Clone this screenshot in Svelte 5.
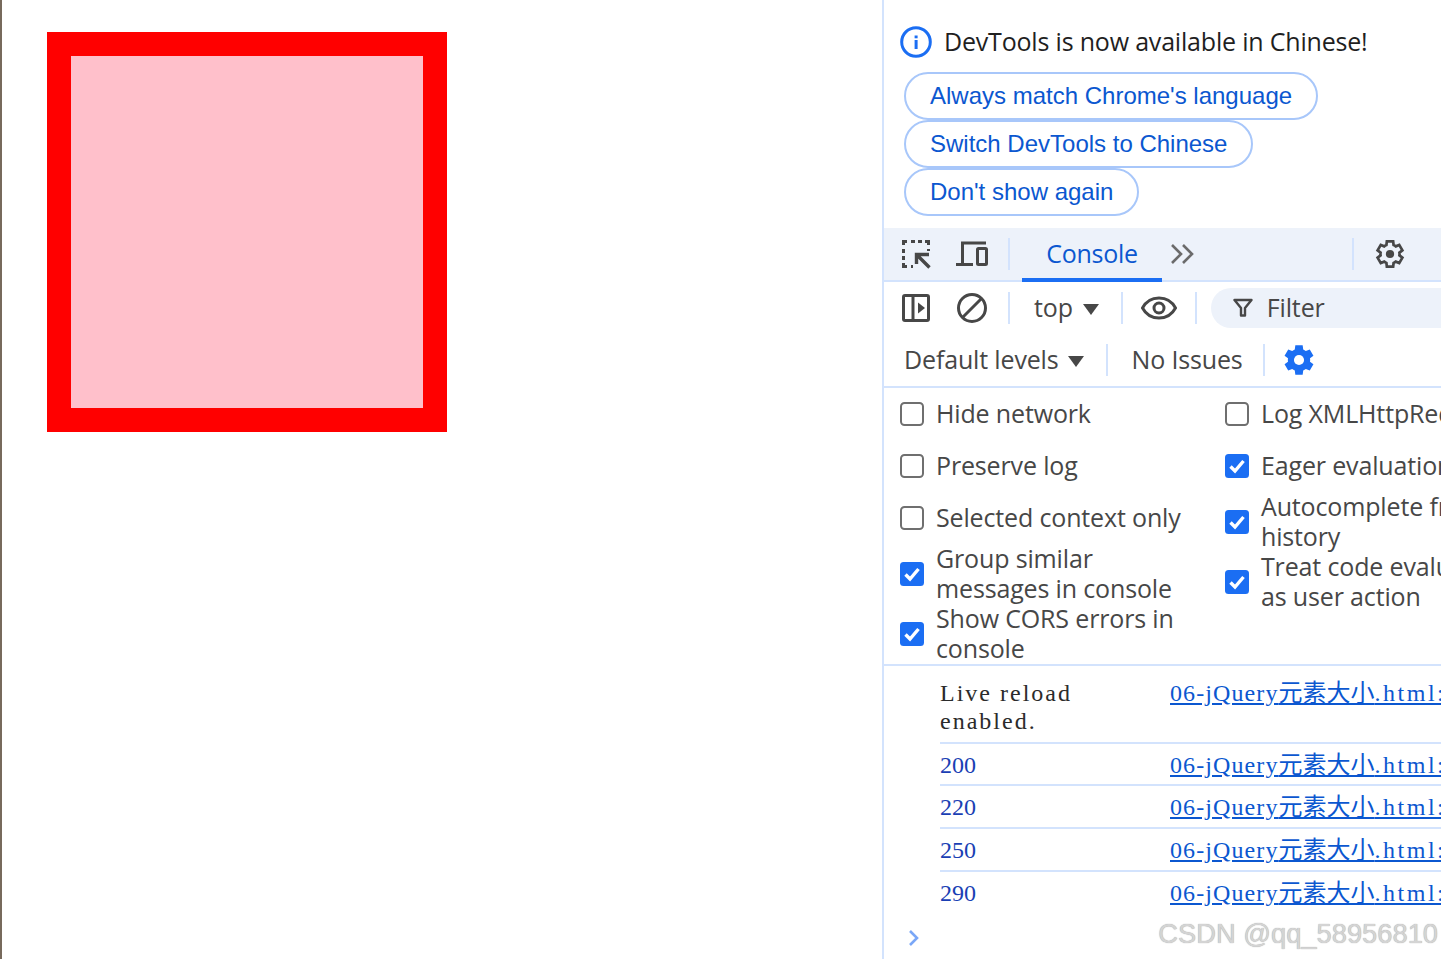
<script>
  const left = [
    { label: 'Hide network', on: false },
    { label: 'Preserve log', on: false },
    { label: 'Selected context only', on: false },
    { label: 'Group similar messages in console', on: true },
    { label: 'Show CORS errors in console', on: true }
  ];
  const right = [
    { label: 'Log XMLHttpRequests', on: false },
    { label: 'Eager evaluation', on: true },
    { label: 'Autocomplete from history', on: true },
    { label: 'Treat code evaluation as user action', on: true }
  ];
  const logs = ['200', '220', '250', '290'];
  const gear = 'M9.25 22l-.4-3.2a7 7 0 0 1-1.96-1.12l-2.97 1.25-2.75-4.75 2.57-1.95a7 7 0 0 1 0-2.46L1.17 7.82l2.75-4.75 2.97 1.25A7 7 0 0 1 8.85 3.2l.4-3.2h5.5l.4 3.2a7 7 0 0 1 1.96 1.12l2.97-1.25 2.75 4.75-2.57 1.95a7 7 0 0 1 0 2.46l2.57 1.95-2.75 4.75-2.97-1.25a7 7 0 0 1-1.96 1.12l-.4 3.2z';
</script>

{#snippet check(on)}
  {#if on}
    <svg class="box" viewBox="0 0 24 24"><rect width="24" height="24" rx="3.5" fill="#1b6ef3"/><path d="M5.5 12.5l4.5 4.5 8.5-10" fill="none" stroke="#fff" stroke-width="3.4"/></svg>
  {:else}
    <svg class="box" viewBox="0 0 24 24"><rect x="1" y="1" width="22" height="22" rx="3.5" fill="none" stroke="#6f6f6f" stroke-width="2"/></svg>
  {/if}
{/snippet}

{#snippet link()}
  <span class="link"><span class="ascii">06-jQuery</span><span class="cjk">元素大小</span><span class="ext">.html:</span></span>
{/snippet}

<div class="page">
  <div class="stripe"></div>
  <main class="view"><div class="square"></div></main>
  <aside class="devtools">
    <div class="notice">
      <div class="headline">
        <svg class="ic32" viewBox="0 0 32 32"><circle cx="16" cy="16" r="14.3" fill="none" stroke="#1b6ef3" stroke-width="3"/><rect x="14.6" y="14" width="3" height="9" fill="#1b6ef3"/><rect x="14.6" y="9.5" width="3" height="2.8" fill="#1b6ef3"/></svg>
        <span class="lift">DevTools is now available in Chinese!</span>
      </div>
      <button>Always match Chrome's language</button>
      <button>Switch DevTools to Chinese</button>
      <button>Don't show again</button>
    </div>

    <div class="tabbar">
      <svg class="ic32 inspect" viewBox="0 0 32 32" fill="none" stroke="#474747" stroke-width="3"><path d="M3.500 7V3.500H7M11 3.500h4M18 3.500h4M25 3.500h3.500V7M28.500 11v2M3.500 11v4M3.500 18v4M3.500 25v3.500H7M11 28.500h2"/><path d="M29.500 29.500L18 18M16.500 26V16.500H29" stroke-width="3.400"/></svg>
      <svg class="ic32 device" viewBox="0 0 32 32" fill="none" stroke="#474747" stroke-width="3"><path d="M30 5H6.500V25"/><path d="M0 26.500h17"/><rect x="21.5" y="10.5" width="9" height="16" rx="1"/></svg>
      <i class="sep wide"></i>
      <div class="tab">Console</div>
      <svg class="more" viewBox="0 0 26 20" fill="none" stroke="#6b6b6b" stroke-width="2.6"><path d="M2 1l9 9-9 9M13 1l9 9-9 9"/></svg>
      <i class="sep sep-right"></i>
      <svg class="ic32 cog" viewBox="-2 -2 28 26"><path d={gear} fill="none" stroke="#474747" stroke-width="2.4"/><circle cx="12" cy="11" r="3.600" fill="#474747"/></svg>
    </div>

    <div class="tools">
      <svg class="ic32" viewBox="0 0 32 32" fill="none" stroke="#474747" stroke-width="3"><rect x="3.5" y="3.5" width="25" height="25" rx="1.5"/><path d="M13 3v26"/><path d="M18 10.5l7 5.5-7 5.5z" fill="#474747" stroke="none"/></svg>
      <svg class="ic32 clear" viewBox="0 0 32 32" fill="none" stroke="#474747" stroke-width="3"><circle cx="16" cy="16" r="13.5"/><path d="M7 25L25 7"/></svg>
      <i class="sep wide"></i>
      <div class="text top"><span class="lift">top</span><span class="tri"></span></div>
      <i class="sep"></i>
      <svg class="eye" viewBox="0 0 36 24" fill="none" stroke="#474747" stroke-width="3"><path d="M1.5 12C5 5.5 11 2 18 2s13 3.500 16.500 10C31 18.500 25 22 18 22S5 18.500 1.500 12z"/><circle cx="18" cy="12" r="5"/></svg>
      <i class="sep"></i>
      <div class="filter">
        <svg class="funnel" viewBox="0 0 20 20" fill="none" stroke="#474747" stroke-width="2.400"><path d="M1.500 2h17L12 10v7.500H8V10z" stroke-linejoin="round"/></svg>
        <span class="lift">Filter</span>
      </div>
    </div>

    <div class="tools levels">
      <div class="text"><span class="lift">Default levels</span><span class="tri"></span></div>
      <i class="sep first-sep"></i>
      <div class="text issues"><span class="lift">No Issues</span></div>
      <i class="sep"></i>
      <svg class="ic32 bluecog" viewBox="0 -1 24 24"><path d={gear} fill="#1b6ef3"/><circle cx="12" cy="11" r="3.800" fill="#fff"/></svg>
    </div>

    <div class="settings">
      <div class="col">
        {#each left as o}
          <label class="opt">{@render check(o.on)}<span>{o.label}</span></label>
        {/each}
      </div>
      <div class="col">
        {#each right as o}
          <label class="opt">{@render check(o.on)}<span>{o.label}</span></label>
        {/each}
      </div>
    </div>

    <div class="console">
      <div class="row first">
        <span class="msg plain">Live reload enabled.</span>
        {@render link()}
      </div>
      {#each logs as n, i}
        <div class="row" class:short={i === 0}>
          <span class="msg num">{n}</span>
          {@render link()}
        </div>
      {/each}
      <svg class="prompt" viewBox="0 0 12 18" fill="none" stroke="#7aa7f7" stroke-width="2.600"><path d="M2 2l7 7-7 7"/></svg>
    </div>
  </aside>
  <div class="mark">CSDN @qq_58956810</div>
</div>

<style>
  :global(body) { margin: 0; background: #fff; }
  .page { display: flex; width: 1441px; height: 959px; overflow: hidden; position: relative; font-family: "Open Sans", "Noto Sans", sans-serif; }
  .stripe { width: 2px; background: #776a5c; flex: none; }
  .view { width: 880px; flex: none; padding: 32px 45px; box-sizing: border-box; }
  .square { width: 400px; height: 400px; box-sizing: border-box; border: 24px solid #f00; background: #ffc0cb; }

  .devtools { flex: none; width: 559px; border-left: 2px solid #d3e3fd; box-sizing: border-box; overflow: hidden; height: 959px; }
  .devtools > * { width: 600px; box-sizing: border-box; }
  .lift { display: block; margin-top: -2px; }

  .notice { padding: 26px 0 0 16px; height: 228px; display: flex; flex-direction: column; align-items: flex-start; }
  .headline { display: flex; align-items: center; gap: 12px; height: 32px; margin-bottom: 14px; color: #1f1f1f; font-size: 25px; letter-spacing: -0.19px; }
  .ic32 { width: 32px; height: 32px; flex: none; display: block; }
  button { height: 48px; box-sizing: border-box; margin-left: 4px; padding: 0 24px; border: 2px solid #a8c7fa; border-radius: 24px; background: #fff; color: #0b57d0; font: 24px "Liberation Sans", Arial, sans-serif; white-space: nowrap; }

  .tabbar { display: flex; align-items: center; height: 54px; background: #edf2fa; border-bottom: 2px solid #d3e3fd; padding-left: 16px; color: #474747; }
  .device { margin-left: 24px; }
  .sep { display: block; width: 2px; height: 32px; background: #d3e3fd; flex: none; margin: 0 12px; }
  .tabbar .sep.wide { margin: 0 12px 0 20px; }
  .tab { height: 54px; box-sizing: border-box; width: 140px; text-align: center; line-height: 50px; border-bottom: 4px solid #1b6ef3; color: #0b57d0; font-size: 25px; letter-spacing: -0.3px; margin-bottom: -2px; }
  .more { width: 26px; height: 20px; margin-left: 8px; flex: none; }
  .tabbar .sep-right { margin-left: 156px; margin-right: 20px; }
  .cog { width: 32px; height: 32px; }

  .tools { display: flex; align-items: center; height: 52px; padding-left: 16px; color: #474747; font-size: 25px; letter-spacing: -0.15px; }
  .clear { margin-left: 24px; }
  .tools > .sep { margin: 0 12px; }
  .tools > .sep.wide { margin: 0 12px 0 20px; }
  .text { display: flex; align-items: center; white-space: nowrap; }
  .top { padding-left: 12px; padding-right: 10px; }
  .tri { display: inline-block; width: 0; height: 0; border-left: 8px solid transparent; border-right: 8px solid transparent; border-top: 11px solid #474747; margin-left: 10px; margin-top: 2px; }
  .levels .tri { margin-left: 9px; }
  .eye { width: 36px; height: 24px; flex: none; margin: 0 6px 0 6px; }
  .filter { display: flex; align-items: center; width: 300px; height: 40px; margin-left: 2px; padding-left: 22px; box-sizing: border-box; border-radius: 20px 0 0 20px; background: #edf2fa; flex: none; }
  .funnel { width: 20px; height: 20px; margin-right: 14px; flex: none; }

  .levels { border-bottom: 2px solid #d3e3fd; height: 54px; padding-left: 20px; }
  .issues { padding: 0 8px 0 12px; }
  .tools > .sep.first-sep { margin-left: 22px; }
  .bluecog { margin-left: 6px; }

  .settings { display: grid; grid-template-columns: 325px 1fr; height: 278px; border-bottom: 2px solid #d3e3fd; padding-left: 16px; color: #474747; font-size: 25px; letter-spacing: -0.15px; line-height: 30px; }
  .opt { display: flex; align-items: center; gap: 12px; min-height: 52px; }
  .opt span { width: 262px; margin: -1px 0 1px; }
  .box { width: 24px; height: 24px; flex: none; }
  .col { display: flex; flex-direction: column; }

  .console { position: relative; padding-left: 56px; font: 24px/28px "Liberation Serif", "Noto Sans CJK SC", serif; }
  .row { display: flex; border-bottom: 2px solid #d3e3fd; padding-top: 7px; height: 43px; box-sizing: border-box; color: #2b2b2b; align-items: baseline; }
  .row.short { height: 42px; }
  .row:last-of-type { border-bottom: none; }
  .first { height: 78px; padding-top: 13px; }
  .msg { width: 230px; flex: none; }
  .plain { letter-spacing: 2px; padding-right: 20px; box-sizing: border-box; }
  .num { color: #1a3fb4; }
  .link { color: #0b57d0; text-decoration: underline; white-space: nowrap; }
  .ascii { letter-spacing: 1.1px; }
  .ext { letter-spacing: 2.5px; }
  .cjk { font-family: "Noto Sans CJK SC", sans-serif; line-height: 24px; }
  .prompt { position: absolute; left: 24px; top: 263px; width: 12px; height: 18px; }
  .mark { position: absolute; right: 3px; top: 918px; color: #d4d4d4; font: 27.300px "Liberation Sans", Arial, sans-serif; text-shadow: 0 0 1px #999; white-space: nowrap; }
</style>
